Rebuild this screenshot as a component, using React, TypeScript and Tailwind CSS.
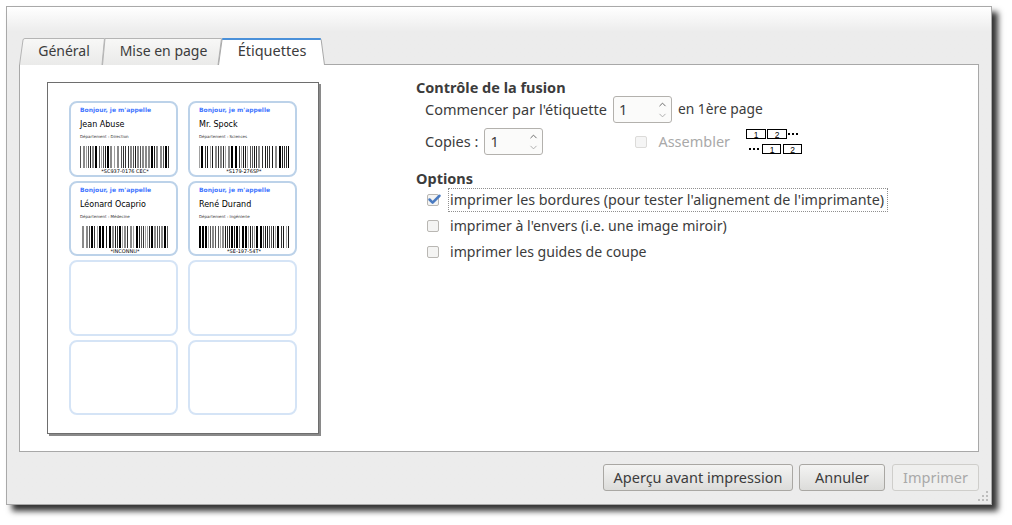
import { Check, ChevronDown, ChevronUp } from "lucide-react";

type Label = {
  name: string;
  dept: string;
  code: string;
  seed: number;
  inset?: boolean;
};

const labels: Label[] = [
  { name: "Jean Abuse", dept: "Département : Direction", code: "*SC937-0176 CEC*", seed: 7 },
  { name: "Mr. Spock", dept: "Département : Sciences", code: "*S179-276SP*", seed: 19 },
  { name: "Léonard Ocaprio", dept: "Département : Médecine", code: "*INCONNU*", seed: 31, inset: true },
  { name: "René Durand", dept: "Département : Ingénierie", code: "*SE-197-54T*", seed: 43 },
];

// bars are pseudo random, the picture is too small to read a real code 39
function buildBars(seed: number, width: number) {
  const bars: { x: number; w: number; shade: string }[] = [];
  let value = seed;
  let x = 0;
  const shades = ["#000000", "#1a1a1a", "#555555", "#8a8a8a", "#333333", "#a0a0a0"];
  while (x < width) {
    value = (value * 73 + 41) % 251;
    const w = value % 3 === 0 ? 2 : 1;
    const gap = value % 5 === 0 ? 2 : 1;
    bars.push({ x, w, shade: shades[value % shades.length] });
    x += w + gap;
  }
  return bars;
}

function Barcode({ seed, width }: { seed: number; width: number }) {
  return (
    <svg width={width} height={22} className="block">
      {buildBars(seed, width).map((bar) => (
        <rect key={bar.x} x={bar.x} y={0} width={Math.min(bar.w, width - bar.x)} height={22} fill={bar.shade} />
      ))}
    </svg>
  );
}

function LabelCard({ label }: { label?: Label }) {
  if (!label) {
    return <div className="h-[75.5px] w-[109px] rounded-[8px] border-2 border-[#d5e4f6] bg-white" />;
  }
  return (
    <div className="flex h-[75.5px] w-[109px] flex-col rounded-[8px] border-2 border-[#bcd2e9] bg-white pl-[9px] font-['DejaVu_Sans',sans-serif] text-black">
      <div className="mt-[2px] h-[10px] text-[6px] font-bold leading-[10px] text-[#4477ff]">Bonjour, je m&apos;appelle</div>
      <div className="mt-[3px] h-[13px] text-[8px] leading-[13px]">{label.name}</div>
      <div className="mt-[2px] h-[8px] text-[4px] leading-[8px] text-[#333]">{label.dept}</div>
      <div className={`mt-[5px] ${label.inset ? "pl-[2px]" : ""}`}>
        <Barcode seed={label.seed} width={label.inset ? 87 : 90} />
      </div>
      <div className="h-[6px] w-[90px] text-center text-[5px] leading-[6px]">{label.code}</div>
    </div>
  );
}

function SpinBox({ value }: { value: string }) {
  return (
    <div className="flex h-[27px] w-[59px] items-center justify-between rounded-[3px] border border-[#b3b1ad] bg-[#fbfbfa] pl-[5px] pr-[3px]">
      <span>{value}</span>
      <span className="flex flex-col">
        <ChevronUp className="h-[11px] w-[11px] text-[#5f5f5f]" strokeWidth={2} />
        <ChevronDown className="h-[11px] w-[11px] text-[#a9a9a9]" strokeWidth={2} />
      </span>
    </div>
  );
}

function CheckBox({ checked, disabled }: { checked?: boolean; disabled?: boolean }) {
  return (
    <span
      className={`relative block h-[12px] w-[12px] rounded-[2px] border ${
        disabled ? "border-[#dcdbd9] bg-[#f5f5f5]" : "border-[#b9b7b3] bg-[#f4f4f3]"
      }`}
    >
      {checked ? <Check className="absolute -left-[1px] -top-[3px] h-[15px] w-[15px] text-[#4a7ac0]" strokeWidth={4} /> : null}
    </span>
  );
}

function CollateIcon() {
  return (
    <svg width={56} height={26} viewBox="0 0 56 26" className="block">
      <g fill="white" stroke="black" strokeWidth={1}>
        <rect x={0.5} y={0.5} width={19} height={9} />
        <rect x={21.5} y={0.5} width={19} height={9} />
        <rect x={16.5} y={15.5} width={18} height={9} />
        <rect x={37.5} y={15.5} width={18} height={9} />
      </g>
      <g fill="black">
        <rect x={42} y={4} width={2} height={2} />
        <rect x={46} y={4} width={2} height={2} />
        <rect x={50} y={4} width={2} height={2} />
        <rect x={3} y={19} width={2} height={2} />
        <rect x={7} y={19} width={2} height={2} />
        <rect x={11} y={19} width={2} height={2} />
      </g>
      <text x={10} y={8.5} fontSize={8.5} textAnchor="middle" fontFamily="Liberation Sans">1</text>
      <text x={31} y={8.5} fontSize={8.5} textAnchor="middle" fontFamily="Liberation Sans">2</text>
      <text x={26} y={23.5} fontSize={8.5} textAnchor="middle" fontFamily="Liberation Sans">1</text>
      <text x={46.5} y={23.5} fontSize={8.5} textAnchor="middle" fontFamily="Liberation Sans">2</text>
    </svg>
  );
}

function Tab({
  title,
  active,
  width,
  shape,
  className,
}: {
  title: string;
  active?: boolean;
  width: number;
  shape: string;
  className: string;
}) {
  return (
    <div className={`relative flex h-[27px] items-center justify-center pb-[2px] ${className}`}>
      <svg className="absolute inset-0" width={width} height={27} viewBox={`0 0 ${width} 27`}>
        <defs>
          <linearGradient id="tab-off" x1="0" y1="0" x2="0" y2="1">
            <stop offset="0" stopColor="#f8f8f7" />
            <stop offset="1" stopColor="#eaeae9" />
          </linearGradient>
        </defs>
        <path d={shape} fill={active ? "#ffffff" : "url(#tab-off)"} stroke={active ? "#a8a8a8" : "#b4b4b4"} />
        {active ? <path d={`M5 1 L${width - 5} 1`} fill="none" stroke="#4a90d9" strokeWidth={2} strokeLinecap="round" /> : null}
      </svg>
      <span className="relative">{title}</span>
    </div>
  );
}

export default function App() {
  return (
    <div className="h-[525px] w-[1012px] overflow-hidden bg-white pl-[6px] pt-[6px] font-['Noto_Sans',sans-serif] text-[14.5px] text-[#3c3c3c]">
      <div className="relative flex h-[499px] w-[986px] flex-col border border-[#a9a9a9] bg-[#ececec] bg-gradient-to-b from-[#ffffff] from-0% to-[#ececec] to-[5%] pl-[12px] pr-[12px] pt-[31px] shadow-[6px_6px_6px_rgba(0,0,0,0.8)]">
        <div className="relative z-10 -mb-px flex">
          <Tab title="Général" width={86} shape="M0.5 27 L4 2 Q4.2 0.5 6 0.5 L85.5 0.5 L83 27" className="w-[86px] pl-[4px] text-[14px]" />
          <Tab title="Mise en page" width={120} shape="M0.5 27 L3 0.5 L119.5 0.5 L116 27" className="-ml-[3px] w-[120px] pl-[3px] text-[14px]" />
          <Tab title="Étiquettes" active width={107} shape="M0.5 27 L4 2 Q4.2 0.5 6 0.5 L101 0.5 Q103 0.5 103.2 2 L106.5 27" className="-ml-[4px] w-[107px] pl-[1px]" />
        </div>
        <div className="flex h-[388px] border border-[#a8a8a8] bg-white pl-[27px] pt-[17px]">
          <div className="flex h-[352px] w-[272px] flex-none flex-col border border-[#6e6e6e] bg-white pl-[21px] pt-[18px] shadow-[2px_2px_0_#8a8a8a]">
            <div className="grid grid-cols-[109px_109px] gap-x-[10px] gap-y-[4px]">
              <LabelCard label={labels[0]} />
              <LabelCard label={labels[1]} />
              <LabelCard label={labels[2]} />
              <LabelCard label={labels[3]} />
              <LabelCard />
              <LabelCard />
              <LabelCard />
              <LabelCard />
            </div>
          </div>
          <div className="ml-[97px] flex flex-col">
            <div className="h-[14px] font-bold leading-[10px]">Contrôle de la fusion</div>
            <div className="ml-[9px] flex h-[27px] items-center">
              <span>Commencer par l&apos;étiquette</span>
              <span className="ml-[6px]"><SpinBox value="1" /></span>
              <span className="ml-[6px] text-[13.8px]">en 1ère page</span>
            </div>
            <div className="ml-[9px] mt-[5px] flex h-[27px] items-center">
              <span>Copies :</span>
              <span className="ml-[6px]"><SpinBox value="1" /></span>
              <span className="ml-[92px]"><CheckBox disabled /></span>
              <span className="ml-[11px] text-[#a9a9a9]">Assembler</span>
              <span className="ml-[16px]"><CollateIcon /></span>
            </div>
            <div className="mt-[14px] h-[18px] font-bold leading-[19px]">Options</div>
            <div className="ml-[11px] flex h-[26px] items-center text-[14.3px]">
              <CheckBox checked />
              <span className="ml-[9px] flex h-[24px] w-[440px] items-center whitespace-nowrap border border-dotted border-[#8f8f8f] pl-[1px]">
                imprimer les bordures (pour tester l&apos;alignement de l&apos;imprimante)
              </span>
            </div>
            <div className="ml-[11px] flex h-[26px] items-center text-[14.1px]">
              <CheckBox />
              <span className="ml-[11px]">imprimer à l&apos;envers (i.e. une image miroir)</span>
            </div>
            <div className="ml-[11px] flex h-[26px] items-center text-[14.1px]">
              <CheckBox />
              <span className="ml-[11px]">imprimer les guides de coupe</span>
            </div>
          </div>
        </div>
        <div className="mt-[12px] flex justify-end">
          <button type="button" className="h-[27px] w-[190px] rounded-[3px] border border-[#a9a7a3] bg-gradient-to-b from-[#f4f4f3] to-[#dcdcda]">
            Aperçu avant impression
          </button>
          <button type="button" className="ml-[6px] h-[27px] w-[86px] rounded-[3px] border border-[#a9a7a3] bg-gradient-to-b from-[#f4f4f3] to-[#dcdcda]">
            Annuler
          </button>
          <button type="button" className="ml-[7px] h-[27px] w-[87px] rounded-[3px] border border-[#cfcecb] bg-[#efefee] text-[#a9a9a9]">
            Imprimer
          </button>
        </div>
        <svg width={12} height={12} viewBox="0 0 12 12" className="absolute bottom-[1px] right-[1px]">
          <g fill="#bdbdbd">
            <rect x={8} y={0} width={2} height={2} />
            <rect x={4} y={4} width={2} height={2} />
            <rect x={8} y={4} width={2} height={2} />
            <rect x={0} y={8} width={2} height={2} />
            <rect x={4} y={8} width={2} height={2} />
            <rect x={8} y={8} width={2} height={2} />
          </g>
        </svg>
      </div>
    </div>
  );
}
